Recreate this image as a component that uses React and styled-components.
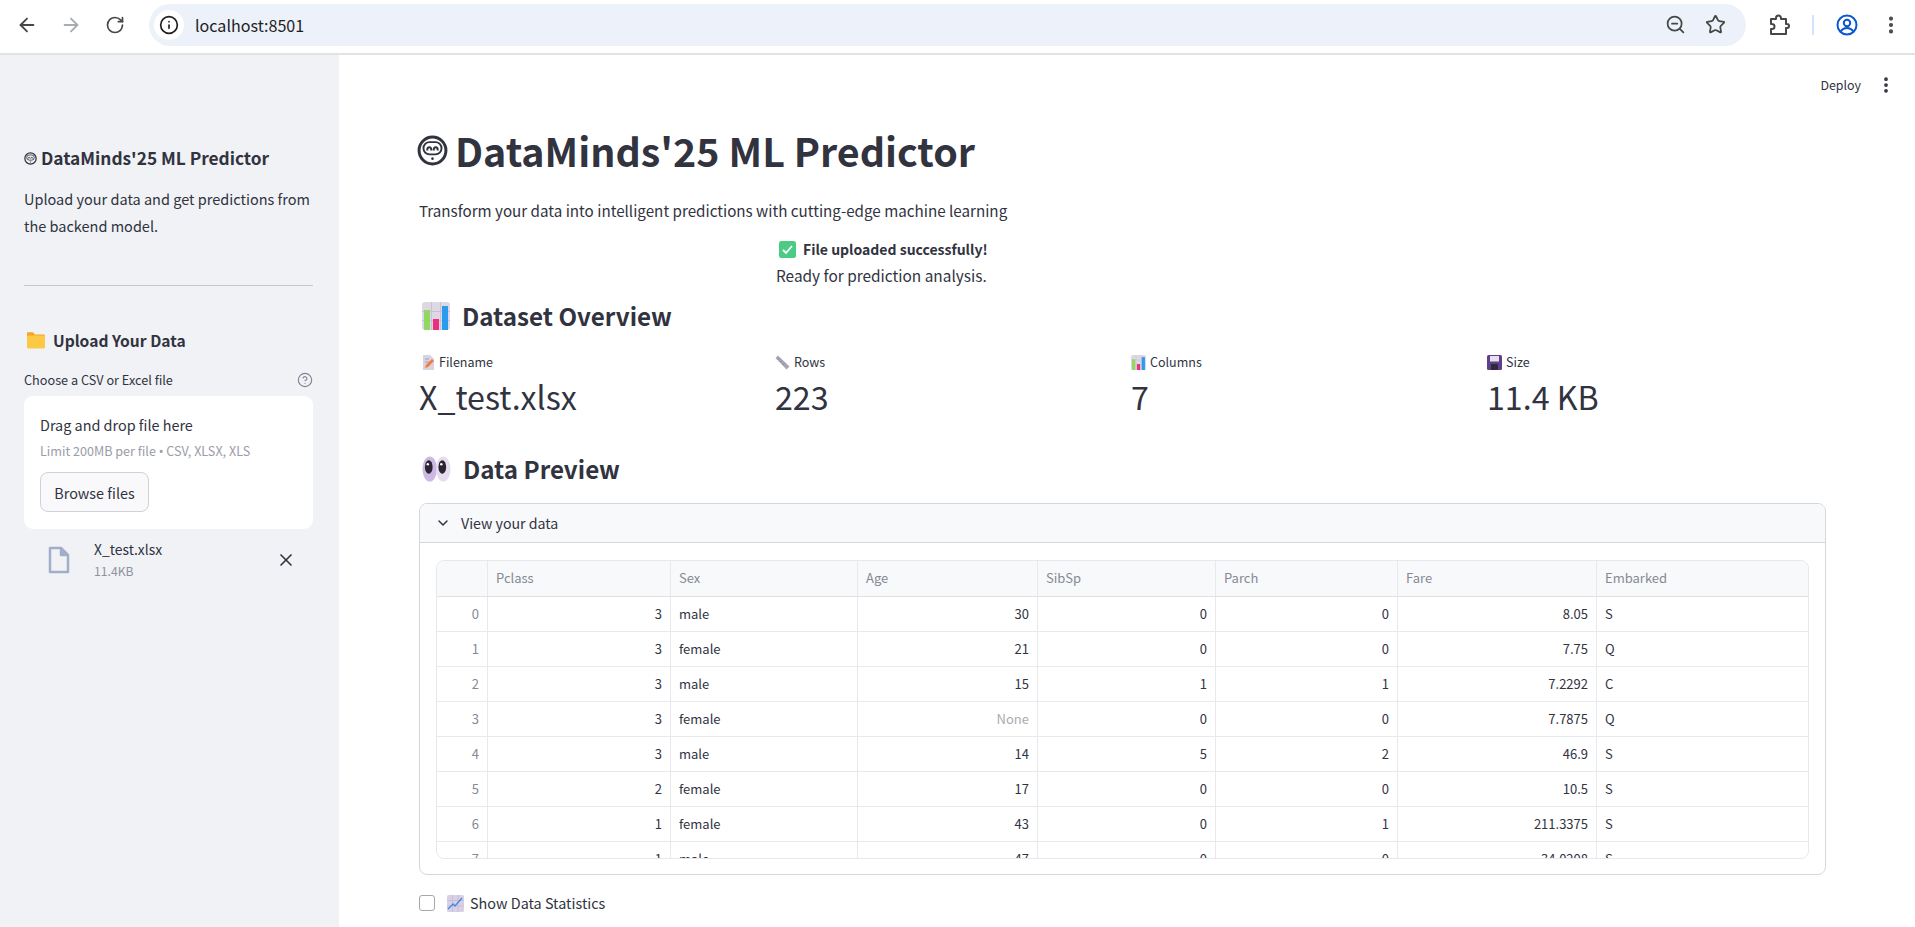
import React from 'react';
import styled, { createGlobalStyle } from 'styled-components';
import { ArrowLeft, ArrowRight, RotateCw, Info, ZoomOut, Star, EllipsisVertical, ChevronDown, X, CircleHelp } from 'lucide-react';

const sans = `"Noto Sans CJK SC", "Source Sans Pro", "Noto Sans", sans-serif`;
const ink = '#31333f';

const GlobalStyle = createGlobalStyle`
  html, body { margin: 0; height: 100%; overflow: hidden; background: #fff; }
  #root { height: 100%; }
  * { box-sizing: border-box; }
  body { font-family: ${sans}; color: ${ink}; }
`;

const Page = styled.div`
  height: 927px;
  display: flex;
  flex-direction: column;
  overflow: hidden;
`;

/* browser chrome */
const ChromeBar = styled.div`
  height: 55px;
  flex: none;
  background: #fff;
  border-bottom: 2px solid #e2e3e5;
  display: flex;
  align-items: center;
  padding: 0 0 4px 5px;
`;

const NavButton = styled.div`
  width: 44px;
  display: flex;
  justify-content: center;
  margin-right: ${({ $gap }) => $gap || 0}px;
  color: ${({ $off }) => ($off ? '#a8abaf' : '#474747')};
`;

const AddressBar = styled.div`
  width: 1597px;
  height: 42px;
  margin-left: 6px;
  border-radius: 21px;
  background: #ecf1fa;
  display: flex;
  align-items: center;
  padding: 0 11px 0 5px;
`;

const InfoBadge = styled.div`
  width: 30px;
  height: 30px;
  border-radius: 50%;
  background: #fff;
  display: flex;
  align-items: center;
  justify-content: center;
  color: #1f1f1f;
`;

const UrlText = styled.div`
  margin-left: 11px;
  font-size: 16.1px;
  line-height: 24px;
  color: #1f1f1f;
  flex: 1;
`;

const BarIcon = styled.div`
  width: 40px;
  display: flex;
  justify-content: center;
  color: #474747;
`;

const ChromeRight = styled.div`
  display: flex;
  align-items: center;
  margin-left: 22px;
  color: #474747;
`;

const BarDivider = styled.div`
  width: 2px;
  height: 20px;
  margin: 0 22px;
  background: #d3e3fd;
`;

const MenuDots = styled.span`
  display: flex;
  margin-left: 22px;
`;

/* app */
const AppBody = styled.div`
  flex: 1;
  display: flex;
  min-height: 0;
`;

const Sidebar = styled.aside`
  width: 339px;
  flex: none;
  background: #f0f2f6;
  padding: 91px 26px 0 24px;
`;

const SideTitle = styled.h3`
  margin: 0;
  font-size: 17.3px;
  line-height: 24px;
  font-weight: 700;
  display: flex;
  align-items: center;
  gap: 4px;
`;

const SideText = styled.p`
  margin: 15px 0 0;
  font-size: 14.5px;
  line-height: 27px;
`;

const SideRule = styled.hr`
  margin: 46px 0 0;
  border: 0;
  border-top: 1px solid #c6c8cf;
`;

const SideHeading = styled.h4`
  margin: 42px 0 0;
  padding-left: 2px;
  font-size: 15.6px;
  line-height: 24px;
  font-weight: 700;
  display: flex;
  align-items: center;
  gap: 8px;
`;

const UploadLabelRow = styled.div`
  margin-top: 18px;
  display: flex;
  align-items: center;
  justify-content: space-between;
  font-size: 12.7px;
  line-height: 20px;
  color: ${ink};
`;

const HelpIcon = styled.span`
  display: flex;
  color: #808495;
`;

const DropZone = styled.div`
  margin-top: 6px;
  background: #fff;
  border-radius: 9px;
  padding: 18px 16px 17px;
`;

const DropTitle = styled.div`
  font-size: 14.4px;
  line-height: 22px;
`;

const DropHint = styled.div`
  margin-top: 6px;
  font-size: 12.6px;
  line-height: 18px;
  color: #9a9ca6;
`;

const HintDot = styled.span`
  font-family: "Noto Sans", sans-serif;
`;

const BrowseButton = styled.div`
  margin-top: 11px;
  width: 109px;
  height: 40px;
  border: 1px solid #cfd1d6;
  border-radius: 8px;
  background: #f9f9fb;
  font-size: 14.4px;
  display: flex;
  align-items: center;
  justify-content: center;
`;

const FileRow = styled.div`
  display: flex;
  align-items: center;
  margin-top: 10px;
  padding: 0 17px 0 23px;
`;

const FileIconWrap = styled.div`
  display: flex;
  width: 35px;
  margin-right: 12px;
`;

const FileMeta = styled.div`
  flex: 1;
`;

const FileName = styled.div`
  font-size: 13.9px;
  line-height: 20px;
`;

const FileSize = styled.div`
  margin-top: 3px;
  font-size: 12.2px;
  line-height: 18px;
  color: #8f929c;
`;

const Main = styled.main`
  flex: 1;
  min-width: 0;
  padding: 0 89px 0 80px;
`;

const DeployRow = styled.div`
  height: 58px;
  padding-top: 18px;
  margin-right: -70px;
  display: flex;
  justify-content: flex-end;
  align-items: flex-start;
  gap: 15px;
  font-size: 12.4px;
  line-height: 24px;
`;

const DeployDots = styled.span`
  display: flex;
  margin-top: 2px;
`;

const Title = styled.h1`
  margin: 13px 0 0;
  font-size: 39.4px;
  line-height: 48px;
  font-weight: 700;
  display: flex;
  align-items: center;
  gap: 7px;
  & > svg { margin-left: -2px; }
`;

const Lead = styled.p`
  margin: 24px 0 0;
  font-size: 15.2px;
  line-height: 24px;
`;

const SuccessBlock = styled.div`
  margin: 14px 0 0 357px;
  font-size: 15.4px;
  line-height: 27px;
`;

const SuccessLine = styled.div`
  font-size: 14px;
  line-height: 26px;
  font-weight: 700;
  display: flex;
  align-items: center;
  gap: 7px;
  padding-left: 3px;
`;

const SectionTitle = styled.h2`
  margin: ${({ $top }) => $top}px 0 0;
  font-size: 24.2px;
  line-height: 36px;
  font-weight: 700;
  display: flex;
  align-items: center;
  gap: 12px;
  padding-left: 3px;
`;

const Metrics = styled.div`
  margin-top: 18px;
  display: grid;
  grid-template-columns: repeat(4, 1fr);
  column-gap: 17px;
`;

const MetricLabel = styled.div`
  font-size: 12.5px;
  line-height: 20px;
  display: flex;
  align-items: center;
  gap: 4px;
`;

const MetricValue = styled.div`
  margin-top: 2px;
  font-size: 32.2px;
  line-height: 44px;
  font-weight: 400;
`;

const Expander = styled.section`
  margin-top: 16px;
  height: 372px;
  border: 1px solid #d5d7db;
  border-radius: 8px;
  overflow: hidden;
`;

const ExpanderHead = styled.div`
  height: 39px;
  background: #f8f9fb;
  border-bottom: 1px solid #d5d7db;
  display: flex;
  align-items: center;
  gap: 10px;
  padding-left: 15px;
  font-size: 14.2px;
`;

const TableBox = styled.div`
  margin: 17px 16px 0;
  height: 299px;
  border: 1px solid #e6e8ec;
  border-radius: 8px;
  overflow: hidden;
`;

const columns = '51px 183px 187px 180px 178px 182px 199px 1fr';

const Row = styled.div`
  display: grid;
  grid-template-columns: ${columns};
  height: 35px;
  border-bottom: 1px solid #e8e9ec;
`;

const HeaderRow = styled(Row)`
  height: 36px;
  background: #f8f9fb;
  border-bottom: 1px solid #dfe1e5;
`;

const Cell = styled.div`
  padding: 0 8px;
  font-size: 13px;
  line-height: 34px;
  text-align: ${({ $right }) => ($right ? 'right' : 'left')};
  color: ${({ $muted }) => ($muted ? '#a9abb2' : ink)};
  border-right: 1px solid #e8e9ec;
  white-space: nowrap;
  &:last-child { border-right: 0; }
`;

const HeadCell = styled(Cell)`
  color: #868994;
`;

const IndexCell = styled(Cell)`
  text-align: right;
  color: #868994;
`;

const StatsRow = styled.label`
  margin-top: 16px;
  display: flex;
  align-items: center;
  font-size: 14.4px;
  line-height: 24px;
`;

const CheckBox = styled.span`
  width: 16px;
  height: 16px;
  border: 1px solid #a5a7af;
  border-radius: 3px;
  background: #fff;
  margin-right: 12px;
`;

const StatsIcon = styled.span`
  display: flex;
  margin-right: 6px;
`;

const PuzzleIcon = () => (
  <svg width="22" height="22" viewBox="0 0 22 22" fill="none" stroke="#474747" strokeWidth="2" strokeLinejoin="round">
    <path d="M3 5h5V4a2.500 2.500 0 0 1 5 0v1h5v5h1a2 2 0 0 1 0 4h-1v6H3v-5h1a2.500 2.500 0 0 0 0-5H3z" />
  </svg>
);

const ProfileIcon = () => (
  <svg width="22" height="22" viewBox="0 0 22 22" fill="none" stroke="#0b57d0" strokeWidth="2">
    <circle cx="11" cy="11" r="9.500" />
    <circle cx="11" cy="9" r="3.200" />
    <path d="M4.500 17.500c2-2.600 4-3.400 6.500-3.400s4.500 .8 6.500 3.400" />
  </svg>
);

const FaceIcon = ({ size }) => (
  <svg width={size} height={size} viewBox="0 0 24 24" fill="none" stroke={ink}>
    <circle cx="12" cy="12" r="10.400" strokeWidth="2.300" />
    <rect x="5" y="5.500" width="14" height="9.500" rx="4.700" strokeWidth="1.500" />
    <path d="M7.900 12c0-3.300 3.200-3.300 3.200 0M12.900 12c0-3.300 3.200-3.300 3.200 0" strokeWidth="1.500" />
    <circle cx="12" cy="18.300" r="1" fill={ink} stroke="none" />
  </svg>
);

const FolderEmoji = () => (
  <svg width="19" height="17" viewBox="0 0 19 17">
    <path d="M1 1.500C1 .7 1.500 .3 2.200 .3H7l2 2.200h8.500c.8 0 1.300.5 1.300 1.300V5H1z" fill="#f5a524" />
    <rect x="1" y="3.500" width="18" height="13" rx="1.500" fill="#fdc944" />
  </svg>
);

const ChartEmoji = ({ size }) => (
  <svg width={size} height={size} viewBox="0 0 28 28">
    <rect width="28" height="28" rx="3" fill="#ddd8e3" />
    <path d="M9.500 0v28M18.500 0v28M0 9.500h28M0 18.500h28" stroke="#c9c3d1" strokeWidth="1" />
    <rect x="2" y="8" width="6" height="20" fill="#8ed863" />
    <rect x="11" y="17" width="6" height="11" fill="#ee2f7c" />
    <rect x="20" y="4" width="6" height="24" fill="#2a9cf0" />
  </svg>
);

const EyesEmoji = () => (
  <svg width="29" height="28" viewBox="0 0 30 28">
    <ellipse cx="8" cy="14" rx="7.500" ry="13" fill="#cdb8e4" />
    <ellipse cx="22" cy="14" rx="7.500" ry="13" fill="#e6dcef" />
    <ellipse cx="7" cy="12" rx="4" ry="7" fill="#2c2430" />
    <ellipse cx="21" cy="12" rx="4" ry="7" fill="#2c2430" />
    <circle cx="6" cy="9" r="1.300" fill="#fff" />
    <circle cx="20" cy="9" r="1.300" fill="#fff" />
  </svg>
);

const CheckEmoji = () => (
  <svg width="17" height="17" viewBox="0 0 17 17">
    <rect width="17" height="17" rx="2.500" fill="#4ccb84" />
    <path d="M4 9l3 3 6-7" fill="none" stroke="#fff" strokeWidth="1.800" />
  </svg>
);

const MemoEmoji = () => (
  <svg width="16" height="15" viewBox="-3 0 16 15">
    <path d="M1 0h7l4 4v11H1z" fill="#d9d2e0" />
    <path d="M3 4h4M3 7h6" stroke="#a79fb2" />
    <path d="M3 13l1-3 6-6 2 2-6 6z" fill="#f47b3c" />
  </svg>
);

const RulerEmoji = () => (
  <svg width="15" height="15" viewBox="0 0 15 15">
    <path d="M3 .5L14.500 11.500l-3 3L.5 3z" fill="#a9a6b4" />
    <path d="M4 3.500l-1 1M6.500 6l-1 1M9 8.500l-1 1" stroke="#77747f" />
  </svg>
);

const FloppyEmoji = () => (
  <svg width="15" height="15" viewBox="0 0 15 15">
    <rect width="15" height="15" rx="1.500" fill="#5f3f8c" />
    <rect x="3" y="1" width="9" height="5.500" fill="#e4e1ea" />
    <rect x="4" y="9" width="7" height="6" fill="#2f2a3a" />
  </svg>
);

const LineEmoji = () => (
  <svg width="17" height="17" viewBox="0 0 17 17">
    <rect width="17" height="17" rx="1.500" fill="#d9cfe6" />
    <path d="M5.500 0v17M11 0v17M0 5.500h17M0 11h17" stroke="#c3b8d3" strokeWidth=".7" />
    <path d="M1 14l5-5 2 2 7-8" fill="none" stroke="#3a8ee0" strokeWidth="1.400" />
  </svg>
);

const FileEmoji = () => (
  <svg width="24" height="28" viewBox="0 0 24 28" fill="none" stroke="#a0aec8" strokeWidth="2.500" strokeLinejoin="round">
    <path d="M3 2h11l7 7v17H3z" />
    <path d="M14 2v7h7" fill="#a0aec8" />
  </svg>
);

const headers = ['Pclass', 'Sex', 'Age', 'SibSp', 'Parch', 'Fare', 'Embarked'];

const rows = [
  [3, 'male', 30, 0, 0, '8.05', 'S'],
  [3, 'female', 21, 0, 0, '7.75', 'Q'],
  [3, 'male', 15, 1, 1, '7.2292', 'C'],
  [3, 'female', 'None', 0, 0, '7.7875', 'Q'],
  [3, 'male', 14, 5, 2, '46.9', 'S'],
  [2, 'female', 17, 0, 0, '10.5', 'S'],
  [1, 'female', 43, 0, 1, '211.3375', 'S'],
  [1, 'male', 47, 0, 0, '34.0208', 'S'],
];

const metrics = [
  { icon: <MemoEmoji />, label: 'Filename', value: 'X_test.xlsx' },
  { icon: <RulerEmoji />, label: 'Rows', value: '223' },
  { icon: <ChartEmoji size={15} />, label: 'Columns', value: '7' },
  { icon: <FloppyEmoji />, label: 'Size', value: '11.4 KB' },
];

export default function App() {
  return (
    <Page>
      <GlobalStyle />
      <ChromeBar>
        <NavButton><ArrowLeft size={22} strokeWidth={2} /></NavButton>
        <NavButton $off><ArrowRight size={22} strokeWidth={2} /></NavButton>
        <NavButton $gap={6}><RotateCw size={20} strokeWidth={2} /></NavButton>
        <AddressBar>
          <InfoBadge><Info size={20} strokeWidth={2} /></InfoBadge>
          <UrlText>localhost:8501</UrlText>
          <BarIcon><ZoomOut size={21} strokeWidth={2} /></BarIcon>
          <BarIcon><Star size={21} strokeWidth={2} /></BarIcon>
        </AddressBar>
        <ChromeRight>
          <PuzzleIcon />
          <BarDivider />
          <ProfileIcon />
          <MenuDots><EllipsisVertical size={22} strokeWidth={2.5} /></MenuDots>
        </ChromeRight>
      </ChromeBar>
      <AppBody>
        <Sidebar>
          <SideTitle><FaceIcon size={13} />DataMinds'25 ML Predictor</SideTitle>
          <SideText>Upload your data and get predictions from the backend model.</SideText>
          <SideRule />
          <SideHeading><FolderEmoji />Upload Your Data</SideHeading>
          <UploadLabelRow>
            Choose a CSV or Excel file
            <HelpIcon><CircleHelp size={16} strokeWidth={1.7} /></HelpIcon>
          </UploadLabelRow>
          <DropZone>
            <DropTitle>Drag and drop file here</DropTitle>
            <DropHint>Limit 200MB per file <HintDot>•</HintDot> CSV, XLSX, XLS</DropHint>
            <BrowseButton>Browse files</BrowseButton>
          </DropZone>
          <FileRow>
            <FileIconWrap><FileEmoji /></FileIconWrap>
            <FileMeta>
              <FileName>X_test.xlsx</FileName>
              <FileSize>11.4KB</FileSize>
            </FileMeta>
            <X size={20} strokeWidth={2} />
          </FileRow>
        </Sidebar>
        <Main>
          <DeployRow>
            Deploy
            <DeployDots><EllipsisVertical size={20} strokeWidth={2.5} /></DeployDots>
          </DeployRow>
          <Title><FaceIcon size={31} />DataMinds'25 ML Predictor</Title>
          <Lead>Transform your data into intelligent predictions with cutting-edge machine learning</Lead>
          <SuccessBlock>
            <SuccessLine><CheckEmoji />File uploaded successfully!</SuccessLine>
            <div>Ready for prediction analysis.</div>
          </SuccessBlock>
          <SectionTitle $top={9}><ChartEmoji size={28} />Dataset Overview</SectionTitle>
          <Metrics>
            {metrics.map((m) => (
              <div key={m.label}>
                <MetricLabel>{m.icon}{m.label}</MetricLabel>
                <MetricValue>{m.value}</MetricValue>
              </div>
            ))}
          </Metrics>
          <SectionTitle $top={33}><EyesEmoji />Data Preview</SectionTitle>
          <Expander>
            <ExpanderHead><ChevronDown size={16} strokeWidth={2.2} />View your data</ExpanderHead>
            <TableBox>
              <HeaderRow>
                <HeadCell />
                {headers.map((h) => <HeadCell key={h}>{h}</HeadCell>)}
              </HeaderRow>
              {rows.map((r, i) => (
                <Row key={i}>
                  <IndexCell>{i}</IndexCell>
                  {r.map((v, j) => (
                    <Cell key={j} $right={typeof v === 'number' || j === 5 || v === 'None'} $muted={v === 'None'}>{v}</Cell>
                  ))}
                </Row>
              ))}
            </TableBox>
          </Expander>
          <StatsRow>
            <CheckBox />
            <StatsIcon><LineEmoji /></StatsIcon>
            Show Data Statistics
          </StatsRow>
        </Main>
      </AppBody>
    </Page>
  );
}
